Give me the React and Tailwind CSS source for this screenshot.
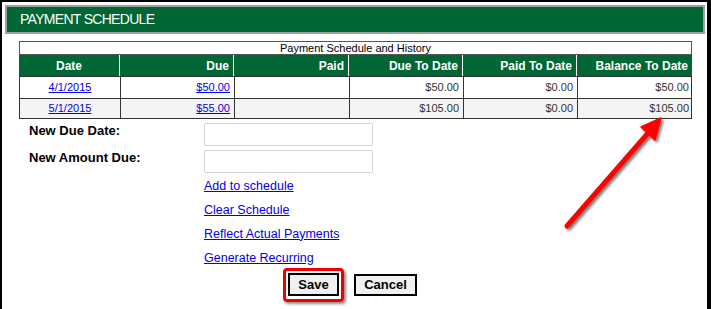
import React from "react";

const cols = "grid grid-cols-[101px_114px_115px_114px_114px_115px]";

const headers = ["Date", "Due", "Paid", "Due To Date", "Paid To Date", "Balance To Date"];
const rows = [
  { date: "4/1/2015", due: "$50.00", paid: "", dtd: "$50.00", ptd: "$0.00", btd: "$50.00", bg: "bg-white" },
  { date: "5/1/2015", due: "$55.00", paid: "", dtd: "$105.00", ptd: "$0.00", btd: "$105.00", bg: "bg-[#f4f4f4]" },
];

export default function App() {
  return (
    <div className="relative w-[711px] h-[309px] bg-white border-l-2 border-t-2 border-r-4 border-black overflow-hidden font-['Liberation_Sans',Arial,sans-serif]">
      <div className="ml-[3px] mt-[3px] w-[700px] h-[29px] bg-[#006633] border-2 border-[#a0a0a0] flex items-center pl-[13px] text-white text-[14px] tracking-[-0.7px]">
        PAYMENT SCHEDULE
      </div>

      <div className="ml-[17px] mt-[7px] w-[673px]">
        <div className="h-[14px] border border-[#555] text-[11px] leading-[12px] text-center text-black">
          Payment Schedule and History
        </div>
        <div className={`${cols} h-[21px] bg-[#006633] text-white text-[12px] font-bold`}>
          {headers.map((h, i) => (
            <div
              key={h}
              className={`flex items-center ${i === 0 ? "justify-center" : "justify-end pr-[4px]"} ${i < 5 ? "border-r border-white" : ""}`}
            >
              {h}
            </div>
          ))}
        </div>
        {rows.map((r, ri) => (
          <div
            key={r.date}
            className={`${cols} ${ri === 0 ? "h-[22px] border-t" : "h-[21px] border-y"} border-x border-[#333] ${r.bg} text-[11px] text-[#333]`}
          >
            <div className="flex items-center justify-center border-r border-[#333]">
              <a href="#" className="text-[#0000ee] underline">{r.date}</a>
            </div>
            <div className="flex items-center justify-end pr-[4px] border-r border-[#333]">
              <a href="#" className="text-[#0000ee] underline">{r.due}</a>
            </div>
            <div className="flex items-center justify-end pr-[4px] border-r border-[#333]">{r.paid}</div>
            <div className="flex items-center justify-end pr-[4px] border-r border-[#333]">{r.dtd}</div>
            <div className="flex items-center justify-end pr-[4px] border-r border-[#333]">{r.ptd}</div>
            <div className="flex items-center justify-end pr-[4px]">{r.btd}</div>
          </div>
        ))}
      </div>

      <div className="mt-[4px] ml-[27px] flex flex-col gap-[4px]">
        <div className="flex">
          <div className="w-[175px] text-[13px] font-bold text-black leading-[16px]">New Due Date:</div>
          <div className="w-[169px] h-[23px] border border-[#d0d4da] rounded-[2px] bg-white"></div>
        </div>
        <div className="flex">
          <div className="w-[175px] text-[13px] font-bold text-black leading-[16px]">New Amount Due:</div>
          <div className="w-[169px] h-[23px] border border-[#d0d4da] rounded-[2px] bg-white"></div>
        </div>
      </div>

      <div className="mt-[1px] ml-[202px] flex flex-col text-[12.5px] text-[#0000ee]">
        {["Add to schedule", "Clear Schedule", "Reflect Actual Payments", "Generate Recurring"].map((l) => (
          <div key={l} className="h-[24px] flex items-center">
            <a href="#" className="underline">{l}</a>
          </div>
        ))}
      </div>

      <div className="mt-[3px] ml-[286px] flex items-end gap-[15px]">
        <div className="relative">
          <div className="absolute left-[-5px] right-[-5px] top-[-5px] bottom-[-6px] border-[3px] border-[#ee0000] rounded-[4px] shadow-[2px_2px_3px_rgba(0,0,0,0.45)]"></div>
          <button className="relative w-[51px] h-[23px] border-2 border-black bg-[#f0f0f0] text-[13px] font-bold text-black flex items-center justify-center">
            Save
          </button>
        </div>
        <button className="w-[63px] h-[22px] border-2 border-black bg-[#f0f0f0] text-[13px] font-bold text-black flex items-center justify-center">
          Cancel
        </button>
      </div>

      <svg className="absolute left-[-2px] top-[-2px] pointer-events-none" width="711" height="309" viewBox="0 0 711 309">
        <defs>
          <filter id="sh" x="-20%" y="-20%" width="140%" height="140%">
            <feDropShadow dx="2" dy="2" stdDeviation="1.5" floodColor="#000" floodOpacity="0.55" />
          </filter>
        </defs>
        <g filter="url(#sh)" fill="#ff0000" stroke="#ff0000">
          <line x1="567" y1="226" x2="649" y2="132" strokeWidth="5" strokeLinecap="round" />
          <polygon points="661,118 655,140 641,127" strokeWidth="1.5" strokeLinejoin="round" />
        </g>
      </svg>
    </div>
  );
}
